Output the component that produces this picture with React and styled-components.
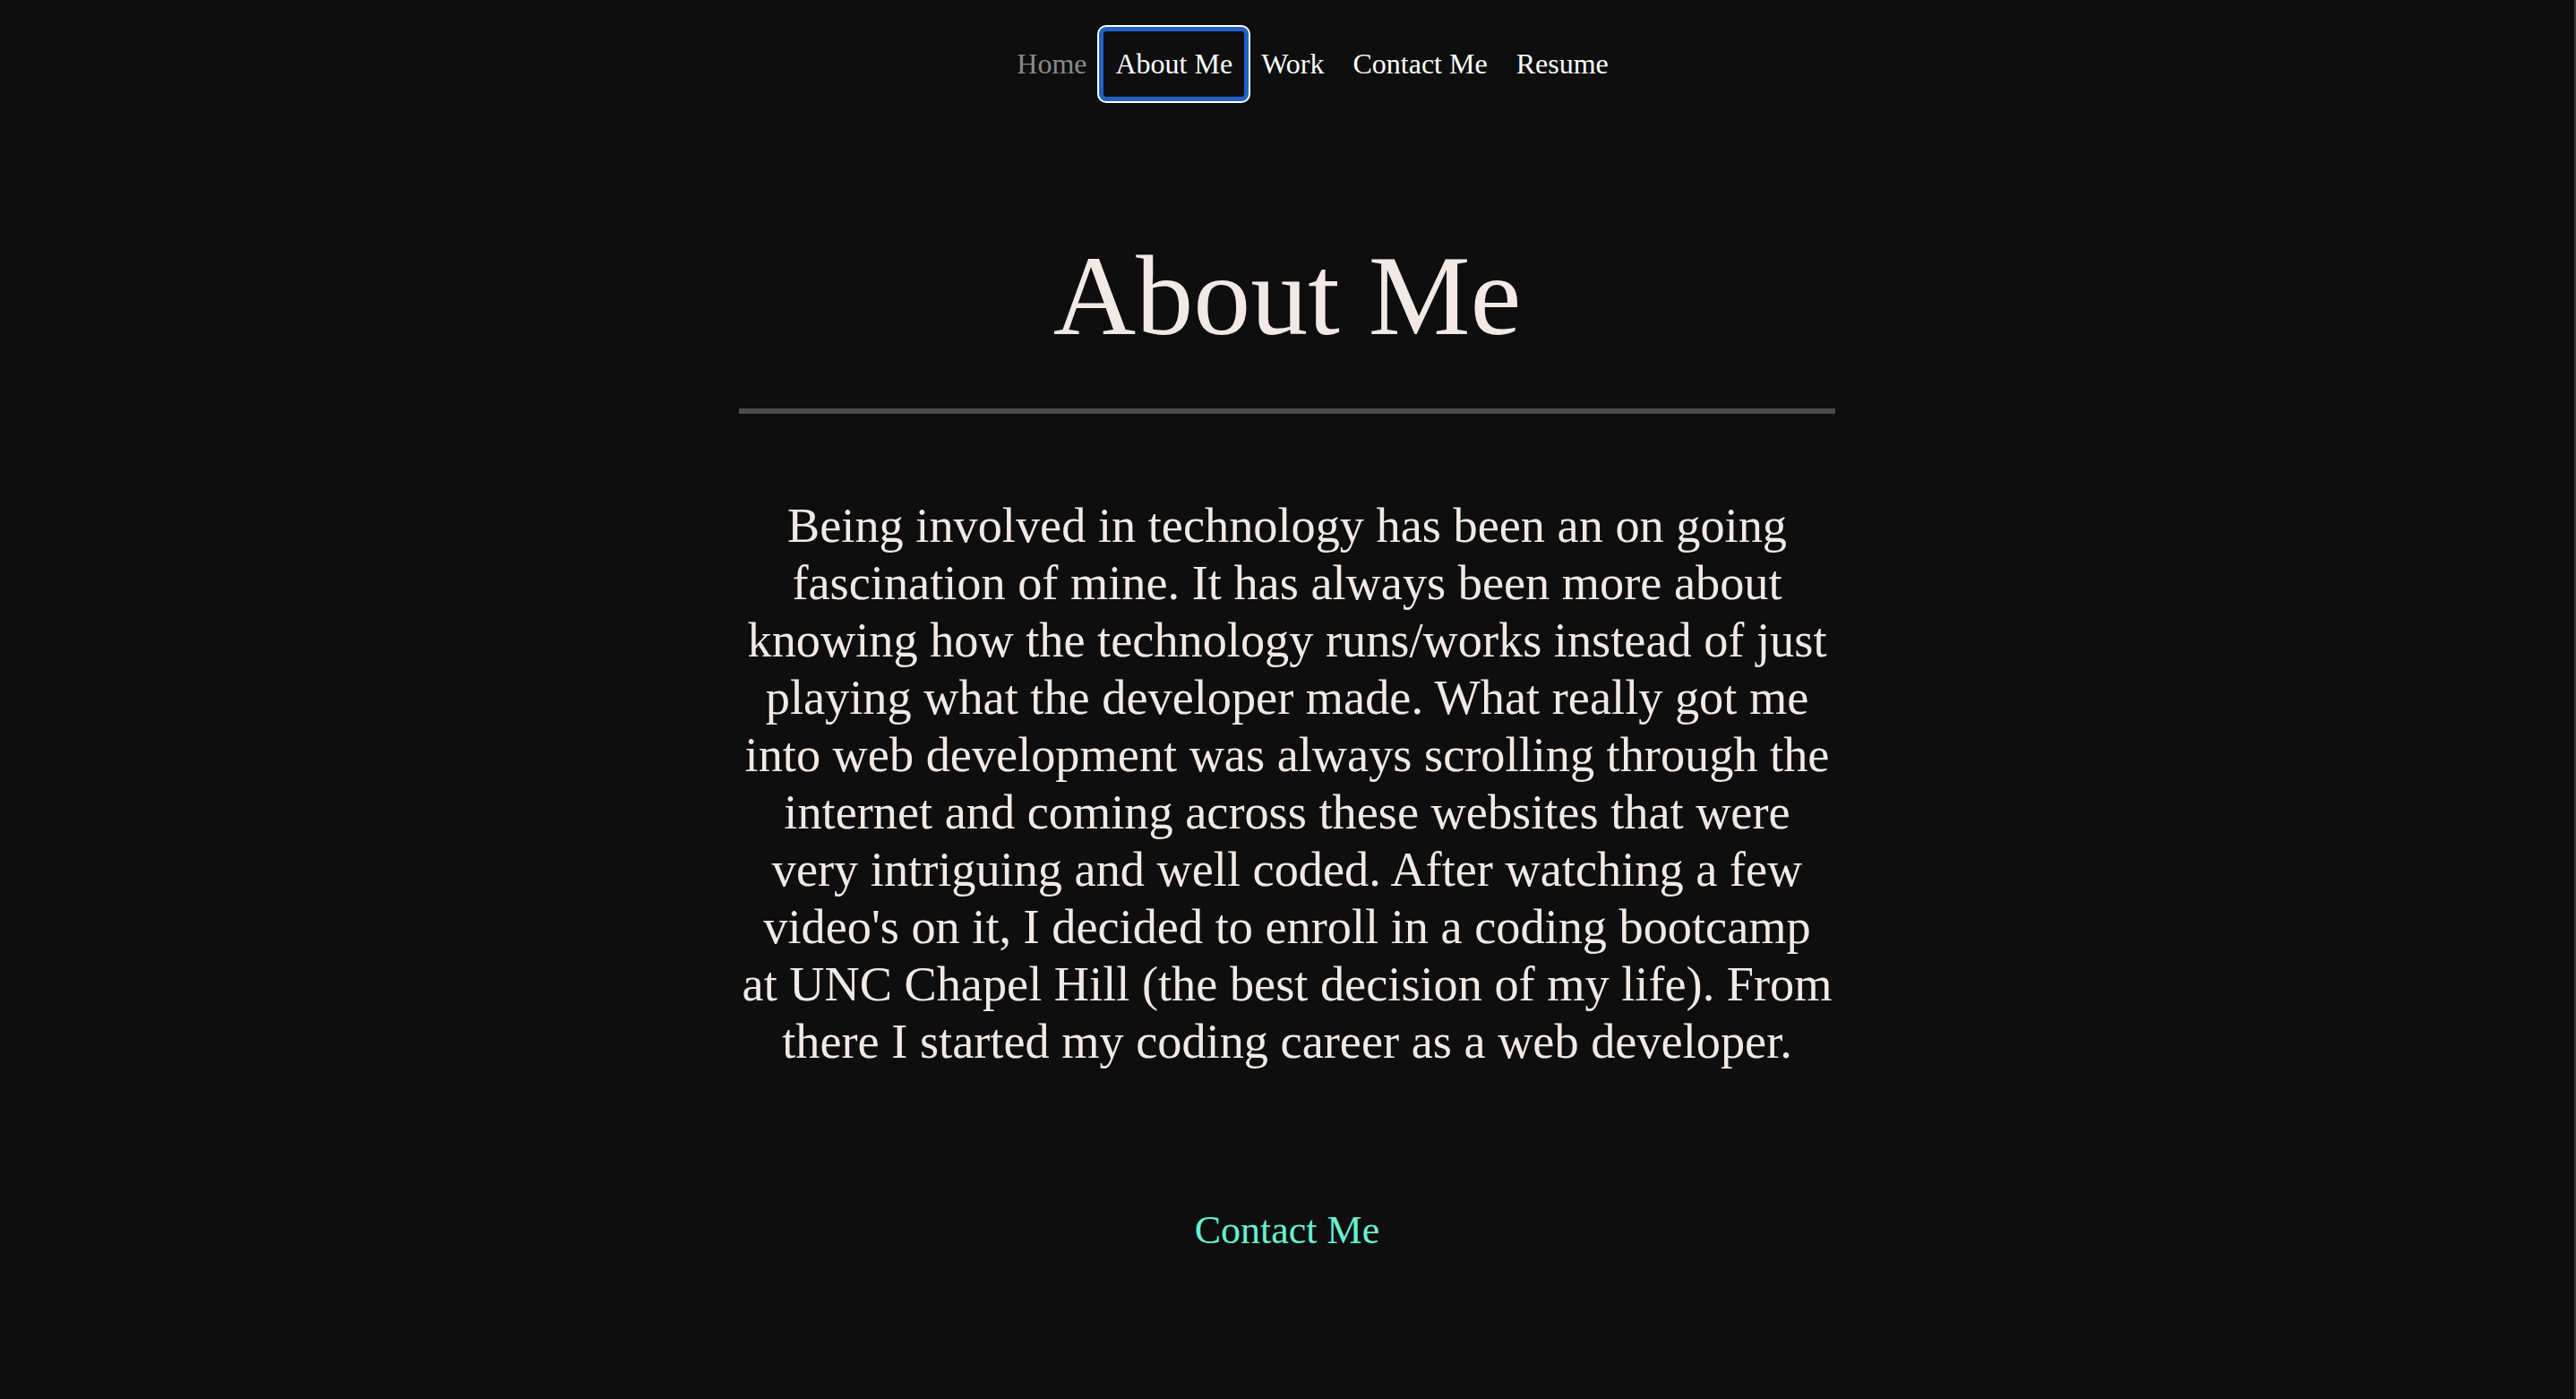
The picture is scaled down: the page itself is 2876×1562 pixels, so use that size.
import React from "react";
import styled, { createGlobalStyle } from "styled-components";

const GlobalStyle = createGlobalStyle`
  html, body {
    margin: 0;
    padding: 0;
    background: #0e0e0e;
  }
  body {
    min-height: 100vh;
    border-right: 2px solid #3a3a3a;
    font-family: "Liberation Serif", "Times New Roman", serif;
    color: #f2e9e4;
  }
  * { box-sizing: border-box; }
`;

const Page = styled.div`
  display: flex;
  flex-direction: column;
  align-items: center;
  min-height: 100vh;
`;

const NavBar = styled.ul`
  display: flex;
  justify-content: center;
  list-style: none;
  margin: 0;
  padding: 32px 0 0 57px;
`;

const NavItem = styled.li`
  display: flex;
`;

const NavLink = styled.a`
  display: block;
  padding: 21px 16px;
  font-size: 32px;
  line-height: normal;
  text-decoration: none;
  border-radius: 6px;
  color: ${(p) => (p.$muted ? "#8a8a8a" : "#ffffff")};
  box-shadow: ${(p) =>
    p.$active
      ? "0 0 0 2px #2161c6, 0 0 0 4px #ffffff, inset 0 0 0 3px #2161c6"
      : "none"};
`;

const Section = styled.main`
  width: 1224px;
  display: flex;
  flex-direction: column;
  align-items: center;
`;

const Title = styled.h1`
  margin: 146px 0 0;
  font-size: 128px;
  font-weight: 400;
  line-height: 147px;
  color: #f2e9e4;
`;

const Divider = styled.hr`
  width: 100%;
  height: 6px;
  margin: 52px 0 0;
  border: 0;
  background: #4b4b4b;
`;

const Bio = styled.p`
  margin: 93px 0 0;
  padding: 0 2px;
  font-size: 54.3px;
  line-height: 64px;
  text-align: center;
  color: #f2e9e4;
`;

const ContactLink = styled.a`
  margin-top: 153px;
  font-size: 44px;
  color: #68f0d2;
  text-decoration: none;
`;

const links = [
  { label: "Home", muted: true },
  { label: "About Me", active: true },
  { label: "Work" },
  { label: "Contact Me" },
  { label: "Resume" },
];

export default function App() {
  return (
    <>
      <GlobalStyle />
      <Page>
        <NavBar>
          {links.map((l) => (
            <NavItem key={l.label}>
              <NavLink href="#" $muted={l.muted} $active={l.active}>
                {l.label}
              </NavLink>
            </NavItem>
          ))}
        </NavBar>
        <Section>
          <Title>About Me</Title>
          <Divider />
          <Bio>
            Being involved in technology has been an on going fascination of
            mine. It has always been more about knowing how the technology
            runs/works instead of just playing what the developer made. What
            really got me into web development was always scrolling through the
            internet and coming across these websites that were very intriguing
            and well coded. After watching a few video's on it, I decided to
            enroll in a coding bootcamp at UNC Chapel Hill (the best decision of
            my life). From there I started my coding career as a web developer.
          </Bio>
          <ContactLink href="#">Contact Me</ContactLink>
        </Section>
      </Page>
    </>
  );
}
